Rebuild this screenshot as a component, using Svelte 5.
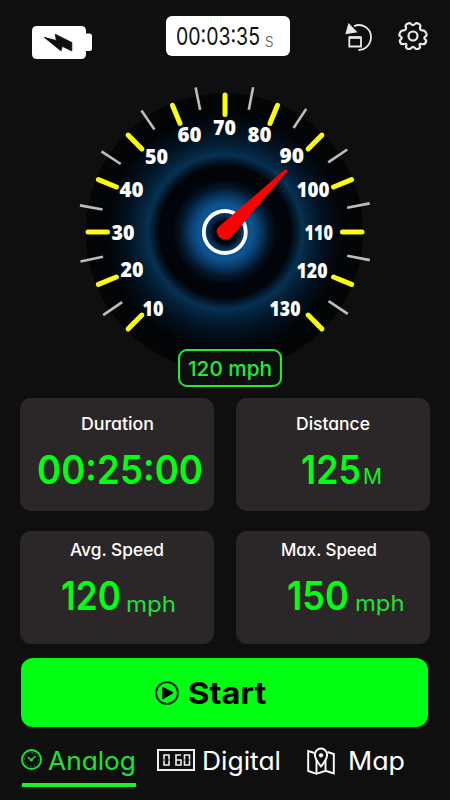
<script>
  const rad = (deg) => (deg * Math.PI) / 180;
  const tick = (deg, r1, r2) => ({
    x1: 225 + Math.cos(rad(deg)) * r1,
    y1: 152 - Math.sin(rad(deg)) * r1,
    x2: 225 + Math.cos(rad(deg)) * r2,
    y2: 152 - Math.sin(rad(deg)) * r2
  });
  const major = Array.from({ length: 13 }, (_, i) => tick(225 - i * 22.5, 117.5, 137));
  const minor = [214.3, 191.5, 169.6, 146.9, 124.5, 101.5, 79, 56.6, 34, 11.2, -11, -33.7].map((d) =>
    tick(d, 124.5, 147.5)
  );
  const numbers = [
    ['10', 142.5, 235.7, 21], ['20', 120.5, 196.5, 23], ['30', 111.5, 160.2, 23], ['40', 119.5, 116.9, 24],
    ['50', 145, 83.8, 23], ['60', 177.5, 62.4, 24], ['70', 213, 55.2, 23], ['80', 247.5, 62.2, 24],
    ['90', 279.5, 82.6, 24.5], ['100', 296.5, 117.2, 33], ['110', 304.5, 160.2, 28.5], ['120', 296.5, 197.6, 31],
    ['130', 269.5, 235.8, 31]
  ];
</script>

{#snippet word(text, width, size, weight)}
  <svg class="word" {width} height={size * 0.727} aria-label={text}>
    <text x="0" y={size * 0.727} font-size={size} font-weight={weight} textLength={width} lengthAdjust="spacingAndGlyphs">{text}</text>
  </svg>
{/snippet}

<div class="app">
  <header>
    <svg class="battery" width="60" height="33" viewBox="0 0 60 33">
      <path fill="#fff" d="M5 0H49Q54 0 54 5V7.500H57.500Q60 7.500 60 10V22.500Q60 25 57.500 25H54V28Q54 33 49 33H5Q0 33 0 28V5Q0 0 5 0Z" />
      <path fill="#0f0f0f" stroke="#0f0f0f" stroke-width=".8" stroke-linejoin="round" d="M12.200 11.300L24.300 14.600L23.300 8.300L39.800 16.500V24.900L30.300 20.300L29 24.900Z" />
    </svg>
    <div class="timer">
      <svg width="84" height="18" class="lcd"><text x="0" y="18" font-size="24.500" textLength="84" lengthAdjust="spacingAndGlyphs">00:03:35</text></svg>
      <svg width="9" height="11" class="lcd unit"><text x="0" y="11" font-size="14" textLength="8.500" lengthAdjust="spacingAndGlyphs">S</text></svg>
    </div>
    <svg class="reset" width="28" height="29" viewBox="0 0 28 29">
      <path d="M9 3.200C17 -.500 26 5.500 26 14C26 21.500 20 27.300 13.500 27" fill="none" stroke="#e8e8e8" stroke-width="1.800" />
      <path d="M3.500 0L12.500 9.200L.300 11.200Z" fill="#e8e8e8" />
      <path d="M4.300 14.300H16V23.500H4.300Z" fill="none" stroke="#e8e8e8" stroke-width="1.800" />
      <path d="M4 14.500H16" stroke="#e8e8e8" stroke-width="2.500" />
    </svg>
    <svg class="gear" width="30" height="28" viewBox="0 0 30 28" fill="none" stroke="#e8e8e8" stroke-width="2.200" stroke-linejoin="round">
      <path d="M15 3.200C16.700 3.200 16.800 1.300 18.300 1.100C19.500 1 21.800 2.100 22.300 3.300C22.800 4.800 21.300 5.800 22.200 7.300C23.100 8.900 24.700 7.900 26.200 8.700C27.400 9.400 28.900 12.200 28.600 13.200C28.300 14.400 26.500 14.600 26.300 16C26.200 17.300 28.500 17.900 28.200 19C28 20.200 26.700 22 25.700 22.200C24.300 22.400 22.700 21.100 21.800 22C20.900 23 22.700 24.600 21.800 25.700C21.200 26.400 19.200 27.200 18.200 27C16.900 26.700 16.600 24.800 15 24.800C13.400 24.800 13.100 26.700 11.800 27C10.800 27.200 8.800 26.400 8.200 25.700C7.300 24.600 9.100 23 8.200 22C7.300 21.100 5.700 22.400 4.300 22.200C3.300 22 2 20.200 1.800 19C1.500 17.900 3.800 17.300 3.700 16C3.500 14.600 1.700 14.400 1.400 13.200C1.100 12.200 2.600 9.400 3.800 8.700C5.300 7.900 6.900 8.900 7.800 7.300C8.700 5.800 7.200 4.800 7.700 3.300C8.200 2.100 10.500 1 11.700 1.100C13.200 1.300 13.300 3.200 15 3.200Z" />
      <circle cx="15" cy="14" r="4.500" />
    </svg>
  </header>

  <section class="gauge">
    <svg width="450" height="290" viewBox="0 0 450 290">
      <defs>
        <radialGradient id="glow" gradientUnits="userSpaceOnUse" cx="225" cy="152" r="139">
          <stop offset="0" stop-color="#000" />
          <stop offset=".08" stop-color="#01060c" />
          <stop offset=".15" stop-color="#0a4a80" />
          <stop offset=".19" stop-color="#0d5794" />
          <stop offset=".25" stop-color="#093d6c" />
          <stop offset=".32" stop-color="#031629" />
          <stop offset=".38" stop-color="#010408" />
          <stop offset=".47" stop-color="#010408" />
          <stop offset=".51" stop-color="#03172a" />
          <stop offset=".555" stop-color="#063152" />
          <stop offset=".62" stop-color="#04213a" />
          <stop offset=".72" stop-color="#02101e" />
          <stop offset=".85" stop-color="#020508" />
          <stop offset="1" stop-color="#050505" />
        </radialGradient>
      </defs>
      <circle cx="224.500" cy="152" r="139" fill="url(#glow)" />
      {#each major as t}
        <line {...t} stroke="#fbff0a" stroke-width="5" stroke-linecap="round" />
      {/each}
      {#each minor as t}
        <line {...t} stroke="#bdbdbf" stroke-width="2.600" />
      {/each}
      {#each numbers as [label, x, y, w]}
        <text class="num" {x} {y} textLength={w} lengthAdjust="spacingAndGlyphs">{label}</text>
      {/each}
      <circle cx="224.800" cy="152" r="21" fill="none" stroke="#fff" stroke-width="3.800" />
      <path d="M284 90.300Q286 88.900 287 90.200Q287.700 91.300 286.500 92.500L231.500 157Q226 162 219.500 157.500Q214 151.500 219 146.500Z" fill="#f00" />
    </svg>
    <div class="badge">{@render word('120 mph', 84, 20.5, 500)}</div>
  </section>

  <main>
    <article>
      <div class="label l1">{@render word('Duration', 73, 17, 500)}</div>
      <div class="value v1">{@render word('00:25:00', 166, 39, 600)}</div>
    </article>
    <article>
      <div class="label l2">{@render word('Distance', 74, 17, 500)}</div>
      <div class="value v2">{@render word('125', 60, 39, 600)}<span class="m">{@render word('M', 19, 21, 400)}</span></div>
    </article>
    <article class="low">
      <div class="label l3">{@render word('Avg. Speed', 94, 17, 500)}</div>
      <div class="value v3">{@render word('120', 60, 39, 600)}<span class="mph a">{@render word('mph', 50, 22, 400)}</span></div>
    </article>
    <article class="low">
      <div class="label l4">{@render word('Max. Speed', 96, 17, 500)}</div>
      <div class="value v4">{@render word('150', 62, 39, 600)}<span class="mph b">{@render word('mph', 49.5, 22, 400)}</span></div>
    </article>
  </main>

  <button class="start">
    <svg width="24" height="24" viewBox="0 0 24 24">
      <circle cx="12" cy="12" r="10.900" fill="none" stroke="#04220a" stroke-width="1.900" />
      <path d="M8 6.600L17.300 11.800L8 17.300Z" fill="#000" stroke="#000" stroke-width="1.600" stroke-linejoin="round" />
    </svg>
    {@render word('Start', 78.5, 30, 700)}
  </button>

  <nav>
    <div class="tab active">
      <svg width="21" height="21" viewBox="0 0 21 21" fill="none" stroke="currentColor">
        <circle cx="10.500" cy="10.500" r="9.500" stroke-width="1.800" />
        <circle cx="10.500" cy="10.500" r="7" stroke-width="1" stroke-dasharray="1 2.665" />
        <path d="M6.800 8L10.300 11.200L14.500 7" stroke-width="1.500" />
        <circle cx="10.300" cy="11" r="1" fill="currentColor" />
      </svg>
      {@render word('Analog', 88, 25.5, 400)}
      <i class="underline"></i>
    </div>
    <div class="tab digital">
      <svg width="38" height="22" viewBox="0 0 38 22" fill="none" stroke="#f3eeee">
        <rect x="1" y="1" width="36" height="20" stroke-width="2" />
        <path stroke-width="1.600" d="M7 6H12V16H7Z M24 6H19V16H24V11H19 M27.500 6H32.500V16H27.500Z" />
        <path stroke="#0f0f0f" stroke-width=".7" d="M6 11H13M26.500 11H33.500" />
      </svg>
      {@render word('Digital', 79, 25.5, 400)}
    </div>
    <div class="tab map">
      <svg width="28" height="28" viewBox="0 0 28 28" fill="none" stroke="#fff" stroke-width="1.900" stroke-linejoin="miter">
        <path d="M7.500 6L1.200 4V24L9.500 26.800L18.500 23.800L26.800 26.500V7L20.500 5" />
        <path d="M9.500 13V26.800M18.500 13V23.800" />
        <path d="M14 19.500C11 15.500 7.900 12 7.900 8C7.900 4.300 10.500 1.500 14 1.500C17.500 1.500 20.100 4.300 20.100 8C20.100 12 17 15.500 14 19.500Z" />
        <circle cx="14" cy="8.300" r="2.100" fill="#fff" stroke="none" />
      </svg>
      {@render word('Map', 57, 25.5, 400)}
    </div>
  </nav>
</div>

<style>
  :global(body) { background: #0f0f0f; }
  .app {
    width: 450px;
    height: 800px;
    overflow: hidden;
    background: #0f0f0f;
    color: #fff;
    font-family: Inter, "Noto Sans", sans-serif;
    font-feature-settings: "cv11";
    display: flex;
    flex-direction: column;
  }
  svg { display: block; flex: none; }
  .word { overflow: visible; fill: currentColor; }
  header { height: 80px; display: flex; align-items: flex-start; padding-left: 32px; box-sizing: border-box; }
  .battery { margin-top: 26px; }
  .timer {
    margin: 16px 0 0 74px;
    width: 124px;
    height: 40px;
    box-sizing: border-box;
    border-radius: 6px;
    background: #fff;
    display: flex;
    padding: 11px 0 0 10px;
    gap: 4.500px;
  }
  .lcd { overflow: visible; fill: #111; font-family: Inter, sans-serif; font-weight: 400; }
  .unit { margin-top: 9px; fill: #555; font-weight: 300; }
  .reset { margin: 23px 0 0 55px; }
  .gear { margin: 22px 0 0 25px; }
  .gauge { position: relative; height: 318px; }
  .num { font-family: "Open Sans", "Noto Sans", sans-serif; font-weight: 800; font-size: 20.500px; fill: #fff; }
  .badge {
    position: absolute;
    left: 178.400px;
    top: 269.400px;
    width: 104px;
    height: 37.500px;
    box-sizing: border-box;
    border: 2.500px solid #20ee32;
    border-radius: 9px;
    background: #0c0f0d;
    color: #20ee32;
    display: flex;
    align-items: center;
    justify-content: center;
  }
  main { display: grid; grid-template-columns: 194px 194px; column-gap: 22.400px; row-gap: 20.500px; padding-left: 20px; }
  article { height: 112.500px; border-radius: 11px; background: #2b2728; box-sizing: border-box; padding-top: 19.500px; }
  article.low { padding-top: 13px; }
  .label { height: 12.500px; display: flex; }
  .l1 { padding-left: 60.500px; }
  .l2 { padding-left: 59.500px; }
  .l3 { padding-left: 50px; }
  .l4 { padding-left: 45px; }
  .value { display: flex; align-items: flex-end; margin-top: 26px; height: 28px; color: #00ff12; }
  .v1 { padding-left: 17.300px; }
  .v2 { padding-left: 64.500px; }
  .v3 { padding-left: 41px; }
  .v4 { padding-left: 50.500px; }
  .m { margin-left: 2.500px; color: #0cf51e; }
  .mph { color: #22e035; margin-left: 5px; }
  .mph.a { margin-bottom: -1px; }
  .mph.b { margin-left: 6px; }
  .start {
    margin: 14.500px 0 0 21.400px;
    width: 407px;
    height: 69px;
    flex: none;
    border: 0;
    padding: 0 0 0 133.500px;
    border-radius: 12px;
    background: #00ff12;
    color: #000;
    display: flex;
    align-items: center;
    gap: 9px;
    font-family: inherit;
  }
  nav { display: flex; padding-left: 21px; height: 72px; }
  .tab { display: flex; align-items: flex-start; height: 60px; box-sizing: border-box; }
  .tab svg { margin-top: 22px; }
  .tab .word, .tab :global(.word) { margin-top: 24px; }
  .active { position: relative; color: #20e233; width: 115px; gap: 5.500px; }
  .underline { position: absolute; left: 1px; bottom: 0; width: 114px; height: 4.500px; background: #13f526; }
  .digital { margin-left: 21px; gap: 7px; }
  .map { margin-left: 26px; gap: 13px; }
  .map svg { margin-top: 19.500px; }
  .map :global(.word) { margin-top: 24px; }
</style>
